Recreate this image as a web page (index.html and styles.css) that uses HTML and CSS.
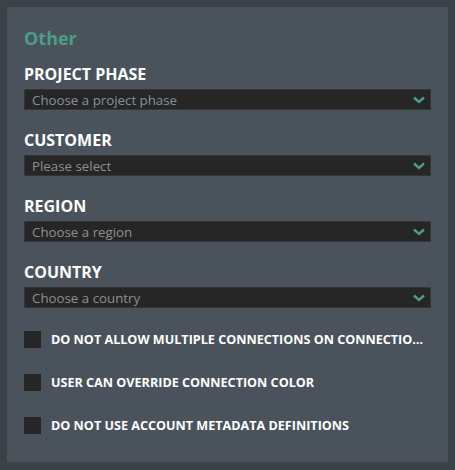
FILE: index.html
```html
<!DOCTYPE html>
<html>
<head>
<meta charset="utf-8">
<link rel="stylesheet" href="styles.css">
</head>
<body>
<div class="panel">
  <h2 class="title">Other</h2>
  <div class="field first">
    <div class="label">PROJECT PHASE</div>
    <div class="select"><span>Choose a project phase</span><svg class="chev" width="12" height="8" viewBox="0 0 12 8"><path d="M1 1.5 L6 6 L11 1.5" fill="none" stroke="#4a9e88" stroke-width="2.4"/></svg></div>
  </div>
  <div class="field">
    <div class="label">CUSTOMER</div>
    <div class="select"><span>Please select</span><svg class="chev" width="12" height="8" viewBox="0 0 12 8"><path d="M1 1.5 L6 6 L11 1.5" fill="none" stroke="#4a9e88" stroke-width="2.4"/></svg></div>
  </div>
  <div class="field">
    <div class="label">REGION</div>
    <div class="select"><span>Choose a region</span><svg class="chev" width="12" height="8" viewBox="0 0 12 8"><path d="M1 1.5 L6 6 L11 1.5" fill="none" stroke="#4a9e88" stroke-width="2.4"/></svg></div>
  </div>
  <div class="field">
    <div class="label">COUNTRY</div>
    <div class="select"><span>Choose a country</span><svg class="chev" width="12" height="8" viewBox="0 0 12 8"><path d="M1 1.5 L6 6 L11 1.5" fill="none" stroke="#4a9e88" stroke-width="2.4"/></svg></div>
  </div>
  <div class="checks">
    <div class="check"><span class="box"></span><span class="ctext">DO NOT ALLOW MULTIPLE CONNECTIONS ON CONNECTIONLINES BETWEEN OBJECTS</span></div>
    <div class="check"><span class="box"></span><span class="ctext">USER CAN OVERRIDE CONNECTION COLOR</span></div>
    <div class="check"><span class="box"></span><span class="ctext">DO NOT USE ACCOUNT METADATA DEFINITIONS</span></div>
  </div>
</div>
</body>
</html>
```

FILE: styles.css
```css
html, body {
  margin: 0;
  padding: 0;
  background: #3b4248;
  font-family: "Open Sans", "Noto Sans", sans-serif;
}
body {
  padding: 7px;
  width: 455px;
  height: 470px;
  box-sizing: border-box;
}
.panel {
  width: 441px;
  height: 455px;
  box-sizing: border-box;
  background: #4a535b;
  padding: 19px 17px 0 17px;
}
.title {
  margin: 0;
  height: 24px;
  line-height: 24px;
  font-size: 18px;
  font-weight: 700;
  color: #4a9e88;
}
.field {
  margin-top: 19px;
}
.field.first { margin-top: 13px; }
.label {
  height: 22px;
  line-height: 22px;
  font-size: 16px;
  font-weight: 700;
  color: #ffffff;
  margin-bottom: 4px;
}
.select {
  height: 21px;
  background: #262626;
  border: 1px solid #333536;
  box-sizing: border-box;
  display: flex;
  align-items: center;
  justify-content: space-between;
  padding: 0 5px 0 7px;
}
.select span {
  font-size: 13.3px;
  color: #8b9095;
}
.chev { display: block; }
.checks {
  margin-top: 23px;
  display: flex;
  flex-direction: column;
  gap: 26px;
}
.check {
  display: flex;
  align-items: center;
  height: 17px;
}
.box {
  flex: none;
  width: 17px;
  height: 17px;
  background: #262626;
  margin-right: 10px;
}
.ctext {
  font-size: 12.6px;
  font-weight: 700;
  color: #ffffff;
  white-space: nowrap;
  overflow: hidden;
  text-overflow: ellipsis;
  max-width: 374px;
}
```
